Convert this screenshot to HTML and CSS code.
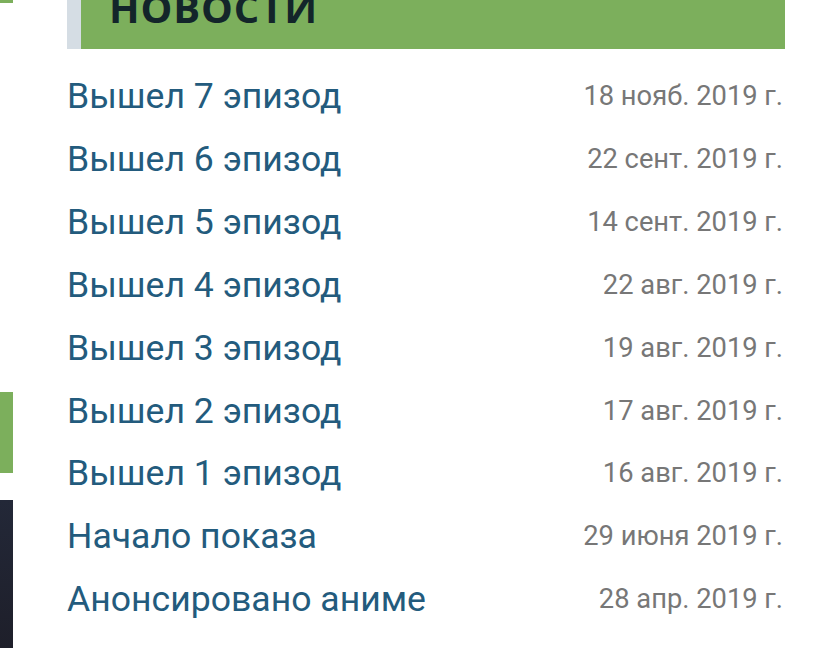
FILE: index.html
```html
<!DOCTYPE html>
<html lang="ru">
<head>
<meta charset="utf-8">
<title>Новости</title>
<link rel="stylesheet" href="styles.css">
</head>
<body>
<div class="page">
  <aside class="side">
    <div class="side-top"></div>
    <div class="side-green"></div>
    <div class="side-dark"></div>
  </aside>
  <main class="main">
    <div class="head">
      <div class="head-strip"></div>
      <div class="head-bar"><h2 class="title">НОВОСТИ</h2></div>
    </div>
    <ul class="news">
      <li class="row"><a class="link" href="#">Вышел 7 эпизод</a><span class="date">18 нояб. 2019 г.</span></li>
      <li class="row"><a class="link" href="#">Вышел 6 эпизод</a><span class="date">22 сент. 2019 г.</span></li>
      <li class="row"><a class="link" href="#">Вышел 5 эпизод</a><span class="date">14 сент. 2019 г.</span></li>
      <li class="row"><a class="link" href="#">Вышел 4 эпизод</a><span class="date">22 авг. 2019 г.</span></li>
      <li class="row"><a class="link" href="#">Вышел 3 эпизод</a><span class="date">19 авг. 2019 г.</span></li>
      <li class="row"><a class="link" href="#">Вышел 2 эпизод</a><span class="date">17 авг. 2019 г.</span></li>
      <li class="row"><a class="link" href="#">Вышел 1 эпизод</a><span class="date">16 авг. 2019 г.</span></li>
      <li class="row"><a class="link" href="#">Начало показа</a><span class="date">29 июня 2019 г.</span></li>
      <li class="row"><a class="link" href="#">Анонсировано аниме</a><span class="date">28 апр. 2019 г.</span></li>
    </ul>
  </main>
</div>
</body>
</html>
```

FILE: styles.css
```css
html, body {
  margin: 0;
  padding: 0;
  background: #ffffff;
  overflow: hidden;
}
body {
  font-family: Roboto, "Liberation Sans", sans-serif;
}
.page {
  display: flex;
  width: 814px;
  height: 648px;
}
.side {
  width: 13px;
  flex: none;
  display: flex;
  flex-direction: column;
}
.side-top {
  height: 3px;
  background: #7caf5c;
}
.side-green {
  margin-top: 389px;
  height: 81px;
  background: #7caf5c;
}
.side-dark {
  margin-top: 27px;
  flex: 1;
  background: linear-gradient(180deg, #232838 0%, #1e1f2a 100%);
}
.main {
  margin-left: 54px;
  width: 718px;
  flex: none;
}
.head {
  display: flex;
  height: 49px;
}
.head-strip {
  width: 14px;
  background: #d5dde4;
}
.head-bar {
  flex: 1;
  background: #7caf5c;
  display: flex;
  align-items: flex-end;
  padding-left: 28px;
  padding-bottom: 21px;
  overflow: hidden;
}
.title {
  margin: 0;
  font-family: "Open Sans", "DejaVu Sans", sans-serif;
  font-weight: 700;
  font-size: 40px;
  line-height: 40px;
  letter-spacing: 0.9px;
  color: #13252a;
}
.news {
  list-style: none;
  margin: 0;
  padding: 16px 0 0 0;
}
.row {
  height: 62.85px;
  display: flex;
  align-items: center;
  justify-content: space-between;
}
.link {
  color: #235b7d;
  text-decoration: none;
  font-size: 35.6px;
}
.date {
  color: #777777;
  font-size: 27.3px;
  margin-right: 2px;
}
```
